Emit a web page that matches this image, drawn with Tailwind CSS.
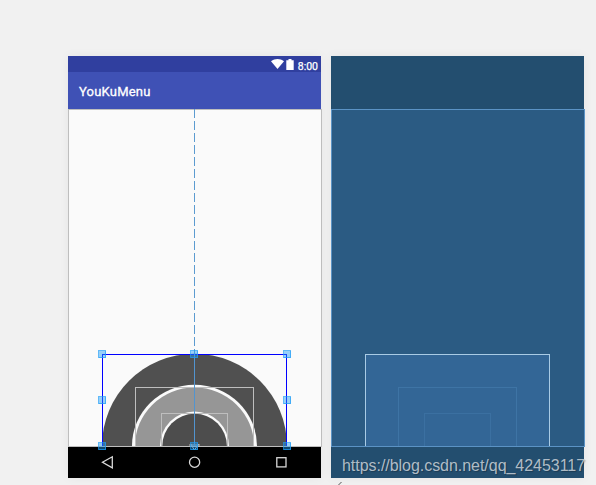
<!DOCTYPE html>
<html lang="en">
<head>
<meta charset="utf-8">
<title>YouKuMenu</title>
<script src="https://cdn.jsdelivr.net/npm/@tailwindcss/browser@4"></script>
</head>
<body class="bg-[#f1f1f1] overflow-hidden">
<main class="relative w-[596px] h-[485px] overflow-hidden pl-[68px] pt-[56px] flex gap-[10px]">
  <!-- Design preview -->
  <section class="w-[253px] h-[422px] shrink-0 flex flex-col shadow-[0_0_10px_rgba(0,0,0,0.05)] font-['Roboto',sans-serif]">
    <div class="h-4 bg-[#303f9f] flex justify-end items-start pr-[3px] text-white">
      <svg class="w-[13px] h-[10px] mt-[3px]" viewBox="0 0 13 10" fill="#fff"><path d="M0 2.3C4-.7 9-.7 13 2.3L6.5 10Z"/></svg>
      <svg class="w-[8px] h-[11px] ml-[2px] mt-[3px]" viewBox="0 0 8 11" fill="#fff"><path d="M.3 1.2h2.200V0h3v1.200h2.200V11H.3z"/></svg>
      <span class="text-[10.5px] leading-[12px] font-normal [-webkit-text-stroke:0.25px_white] ml-[4px] mt-[5px]">8:00</span>
    </div>
    <div class="h-[37px] bg-[#3f51b5] flex items-center pl-[11px] pt-[3px] text-white text-[13px] font-normal tracking-[0.2px] [-webkit-text-stroke:0.3px_white]">YouKuMenu</div>
    <div class="w-[254px] h-[338px] bg-[#fafafa] border border-[#bebebe]"></div>
    <div class="h-[31px] bg-black">
      <svg class="w-[253px] h-[31px]" viewBox="0 0 253 31" fill="none" stroke="#d8d8d8" stroke-width="1.3"><path d="M44.3 9.8v11L34.5 15.3Z"/><circle cx="126.6" cy="15.2" r="5.1"/><rect x="208.8" y="10.7" width="9.2" height="9.2"/></svg>
    </div>
  </section>
  <!-- Blueprint -->
  <section class="w-[253px] h-[422px] shrink-0 bg-[#234e6f] pt-[53px] shadow-[0_0_10px_rgba(0,0,0,0.05)]">
    <div class="w-[254px] h-[338px] bg-[#2b5b83] border border-[#5b93c5] pl-[33px] pt-[244px]">
      <div class="w-[185px] h-[92px] border border-b-0 border-[#a9cbe5] bg-[#336696] pl-8 pt-8">
        <div class="w-[119px] h-[59px] border border-b-0 border-[#3e74a5] pl-[25px] pt-[25px]">
          <div class="w-[67px] h-[33px] border border-b-0 border-[#3b70a1]"></div>
        </div>
      </div>
    </div>
  </section>
  <!-- Arc menu and selection overlay -->
  <svg class="absolute left-0 top-0 w-[596px] h-[485px]" viewBox="0 0 596 485">
    <path d="M102 446A92.5 92.2 0 0 1 287 446Z" fill="#505050"/>
    <path d="M132 446A62.5 61.2 0 0 1 257 446Z" fill="#fafafa"/>
    <path d="M135 446A59.5 58.5 0 0 1 254 446Z" fill="#969696"/>
    <path d="M160 446A34.5 34.6 0 0 1 229 446Z" fill="#fafafa"/>
    <path d="M162.3 446A32.3 32.3 0 0 1 226.9 446Z" fill="#4d4d4d"/>
    <g fill="none" stroke="#bebebe" shape-rendering="crispEdges">
      <path d="M135.500 446V387.500H253.500V446M161.500 446V413.500H227.500V446M68 109.500H322M68 446.500H322"/>
    </g>
    <path d="M191 444l1.500 3 2 3 2-3 2.500-3M189 445h11" stroke="#b8b8b8" fill="none"/>
    <path d="M102.500 446V354.500H286.500V446" stroke="#00f" fill="none" shape-rendering="crispEdges"/>
    <path d="M194.500 109V354" stroke="#5c9bd0" stroke-dasharray="9 3" shape-rendering="crispEdges"/>
    <path d="M194.500 354V446" stroke="#5294cf" shape-rendering="crispEdges"/>
    <g fill="#1e9df7" fill-opacity=".45" stroke="#1e9df7" stroke-opacity=".7" shape-rendering="crispEdges">
      <rect x="98.500" y="350.500" width="7" height="7"/><rect x="190.500" y="350.500" width="7" height="7"/><rect x="283.500" y="350.500" width="7" height="7"/>
      <rect x="98.500" y="396.500" width="7" height="7"/><rect x="283.500" y="396.500" width="7" height="7"/>
      <rect x="98.500" y="442.500" width="7" height="7"/><rect x="190.500" y="442.500" width="7" height="7"/><rect x="283.500" y="442.500" width="7" height="7"/>
    </g>
    <path d="M338 485.500L341.500 482" stroke="#555" fill="none"/>
  </svg>
  <div class="absolute left-[342px] top-[456px] whitespace-nowrap font-['Liberation_Sans',sans-serif] text-[16px] leading-5 tracking-[-0.04px] text-[#c3ccd4]/90 [text-shadow:1px_1px_1px_rgba(0,0,0,0.25)]">https://blog.csdn.net/qq_42453117</div>
</main>
</body>
</html>
